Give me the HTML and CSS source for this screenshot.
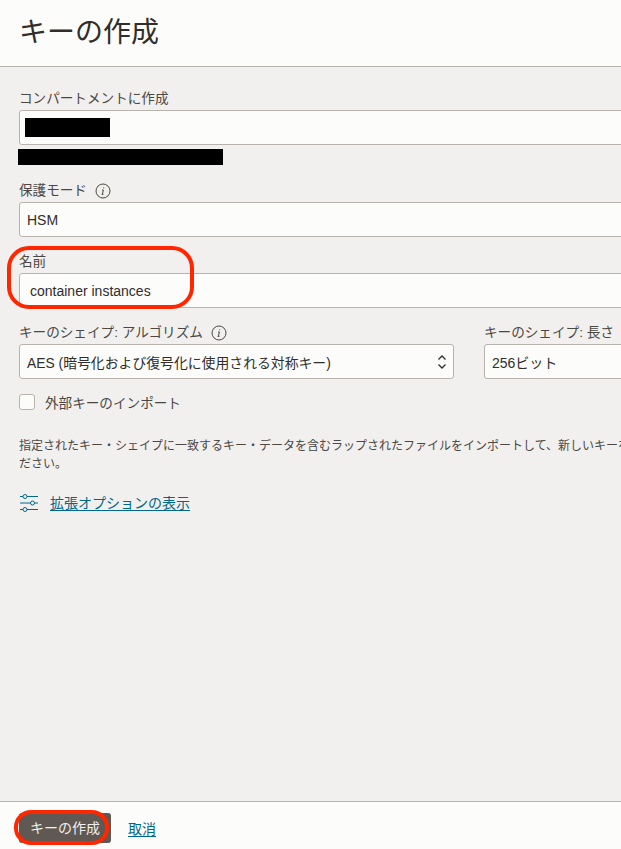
FILE: index.html
```html
<!DOCTYPE html>
<html lang="ja">

<head>
    <meta charset="UTF-8">
    <meta name="viewport" content="width=device-width, initial-scale=1.0">
    <title>キーの作成</title>
    <link rel="stylesheet" href="styles.css">
</head>

<body>
    <div class="panel">
        <header class="panel-header">
            <h1>キーの作成</h1>
        </header>

        <main class="panel-body">
            <div class="field field-compartment">
                <label class="field-label">コンパートメントに作成</label>
                <div class="input"><span class="redact redact-value"></span></div>
                <div class="redact redact-path"></div>
            </div>

            <div class="field">
                <label class="field-label">保護モード
                    <svg class="info" viewBox="0 0 16 16"><circle cx="8" cy="8" r="7"/><path d="M8.700 4.300v1M8.400 7 7.400 11.300M7 7h1.400M6.700 11.400h1.700"/></svg>
                </label>
                <div class="input">HSM</div>
            </div>

            <div class="field">
                <label class="field-label">名前</label>
                <div class="input input-name">container instances</div>
            </div>

            <div class="field-row">
                <div class="field col-algorithm">
                    <label class="field-label">キーのシェイプ: アルゴリズム
                        <svg class="info" viewBox="0 0 16 16"><circle cx="8" cy="8" r="7"/><path d="M8.700 4.300v1M8.400 7 7.400 11.300M7 7h1.400M6.700 11.400h1.700"/></svg>
                    </label>
                    <div class="input input-select">AES (暗号化および復号化に使用される対称キー)
                        <svg class="updown" viewBox="0 0 10 16"><path d="M1.500 5.500 5 2l3.500 3.500M1.500 10.500 5 14l3.500-3.500"/></svg>
                    </div>
                </div>
                <div class="field col-length">
                    <label class="field-label">キーのシェイプ: 長さ</label>
                    <div class="input">256ビット</div>
                </div>
            </div>

            <label class="check">
                <span class="check-box"></span>
                外部キーのインポート
            </label>

            <p class="help">指定されたキー・シェイプに一致するキー・データを含むラップされたファイルをインポートして、新しいキーを作成してく<br>ださい。</p>

            <div class="advanced">
                <svg class="sliders" viewBox="0 0 18 18"><circle cx="5" cy="2.500" r="2"/><circle cx="12.500" cy="9" r="2"/><circle cx="5" cy="15.500" r="2"/><path d="M0 2.500h3M7 2.500h11M0 9h10.500M14.500 9H18M0 15.500h3M7 15.500h11"/></svg>
                <a href="#">拡張オプションの表示</a>
            </div>
        </main>

        <footer class="panel-footer">
            <button class="btn-primary">キーの作成</button>
            <a href="#">取消</a>
        </footer>
    </div>

    <!-- 赤い囲み -->
    <span class="mark mark-name"></span>
    <span class="mark mark-button"></span>
</body>

</html>
```

FILE: styles.css
```css
* {
    box-sizing: border-box;
}

html,
body {
    margin: 0;
    height: 849px;
    overflow: hidden;
}

body {
    position: relative;
    font-family: "Liberation Sans", "Noto Sans CJK JP", sans-serif;
    color: #312d2a;
    background: #f1f0ee;
}

a {
    color: #00688c;
    text-decoration: underline;
    text-underline-offset: 2px;
}

.panel {
    display: flex;
    flex-direction: column;
    height: 849px;
}

.panel-header {
    height: 67px;
    padding: 14px 20px 0;
    background: #fcfcfb;
    border-bottom: 1px solid #b9b3ad;
}

.panel-header h1 {
    margin: 0 0 0 -1px;
    font-size: 28px;
    line-height: 38px;
    font-weight: 400;
}

.panel-body {
    flex: 1;
    width: 760px;
    padding: 21px 0 0 19px;
}

.field {
    margin-bottom: 14px;
}

.field-compartment {
    margin-bottom: 15px;
}

.field-label {
    display: flex;
    align-items: center;
    gap: 8px;
    height: 22px;
    font-size: 13.6px;
    line-height: 22px;
    color: #4b4743;
}

.info {
    width: 16px;
    height: 16px;
    margin-bottom: 1px;
    fill: none;
    stroke: #4b4743;
    stroke-width: 1;
}

.input {
    position: relative;
    display: flex;
    align-items: center;
    height: 35px;
    padding: 0 7px;
    font-size: 14px;
    color: #312d2a;
    background: #fcfcfb;
    border: 1px solid #b9b3ad;
    border-radius: 3px;
}

.input-name {
    padding-left: 10px;
}

.input-select {
    justify-content: space-between;
    font-size: 13.85px;
    padding-right: 6px;
}

.updown {
    width: 10px;
    height: 16px;
    fill: none;
    stroke: #312d2a;
    stroke-width: 1.300;
}

.redact {
    display: block;
    background: #000;
}

.redact-value {
    width: 85px;
    height: 19px;
    margin-left: -2px;
}

.redact-path {
    width: 205px;
    height: 16px;
    margin: 4px 0 0 -1px;
}

.field-row {
    display: flex;
    gap: 30px;
}

.col-algorithm {
    width: 435px;
}

.col-length {
    flex: 1;
}

.check {
    display: flex;
    align-items: center;
    gap: 10px;
    height: 16px;
    margin-top: 1px;
    font-size: 13.6px;
    color: #4b4743;
}

.check-box {
    width: 16px;
    height: 16px;
    background: #fcfcfb;
    border: 1px solid #b9b3ad;
    border-radius: 3px;
}

.help {
    width: 730px;
    margin: 27px 0 0;
    font-size: 12px;
    line-height: 18px;
    color: #4b4743;
}

.advanced {
    display: flex;
    align-items: center;
    gap: 12px;
    margin-top: 20px;
    font-size: 14px;
    line-height: 20px;
}

.sliders {
    width: 18px;
    height: 18px;
    margin-left: 1px;
    fill: none;
    stroke: #00688c;
    stroke-width: 1;
}

.panel-footer {
    display: flex;
    align-items: center;
    gap: 17px;
    height: 48px;
    padding: 4px 19px 0;
    background: #fcfcfb;
    border-top: 1px solid #b9b3ad;
    font-size: 14px;
}

.btn-primary {
    width: 92px;
    height: 30px;
    padding: 0 0 2px 11px;
    font: inherit;
    color: #f1f0ee;
    text-align: left;
    white-space: nowrap;
    background: #5f5853;
    border: 0;
    border-radius: 3px;
}

/* 赤い囲みは画面の上に重ねる */
.mark {
    position: absolute;
    border: 4px solid #ff2600;
}

.mark-name {
    left: 7px;
    top: 246px;
    width: 187px;
    height: 63px;
    border-radius: 22px;
}

.mark-button {
    left: 14px;
    top: 810px;
    width: 95px;
    height: 35px;
    border-radius: 17px;
}
```
